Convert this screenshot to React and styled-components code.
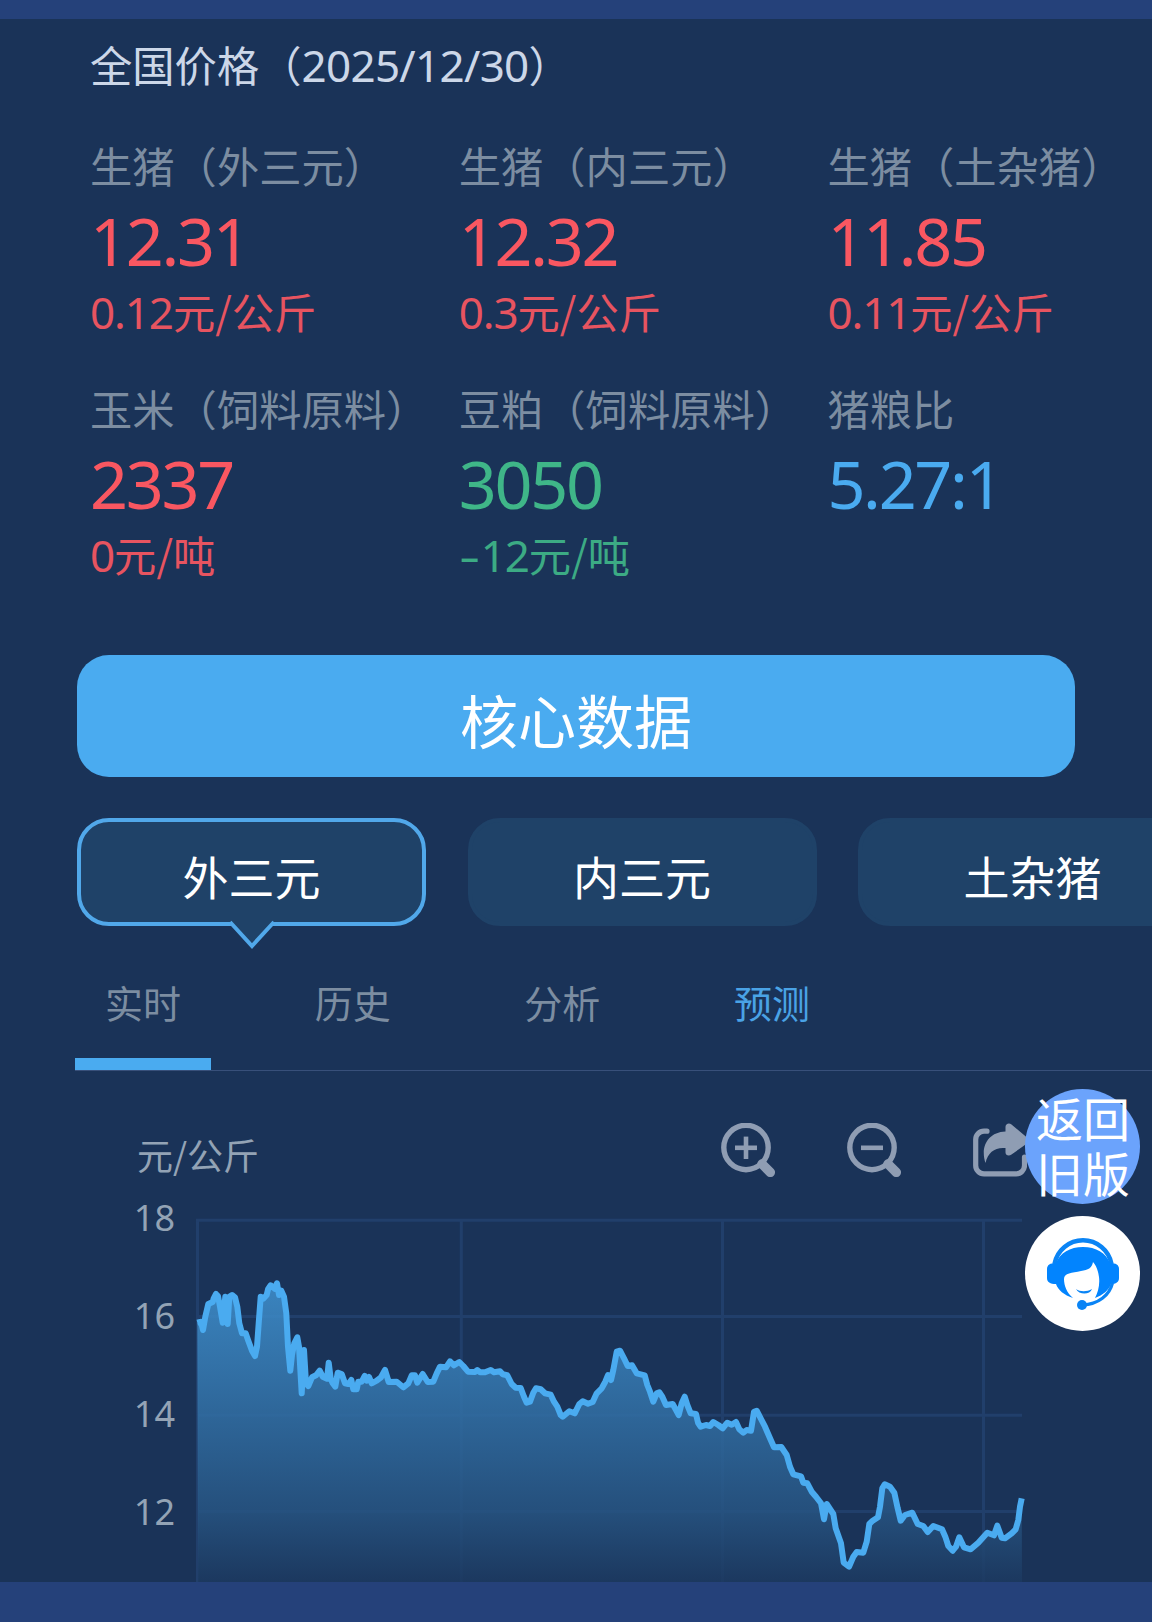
import React from 'react';
import styled, { createGlobalStyle } from 'styled-components';

const prices = [
  { label: '生猪（外三元）', value: '12.31', diff: '0.12', unit: '元/公斤', color: '#f95761' },
  { label: '生猪（内三元）', value: '12.32', diff: '0.3', unit: '元/公斤', color: '#f95761' },
  { label: '生猪（土杂猪）', value: '11.85', diff: '0.11', unit: '元/公斤', color: '#f95761' },
  { label: '玉米（饲料原料）', value: '2337', diff: '0', unit: '元/吨', color: '#f95761' },
  { label: '豆粕（饲料原料）', value: '3050', sign: '-', diff: '12', unit: '元/吨', color: '#3fb688' },
  { label: '猪粮比', value: '5.27:1', color: '#4aabf0' },
];

const kinds = ['外三元', '内三元', '土杂猪'];
const tabs = ['实时', '历史', '分析', '预测'];
const ticks = [18, 16, 14, 12];
const gridX = [7.5, 271.3, 532.5, 793.5];
const gridY = [10.3, 106.5, 205.3, 301.5];

const points = [
  [7.3, 112.7], [11, 111.7], [13, 120], [15.3, 106.7], [18.3, 94], [22.7, 92], [23.7, 88.3], [26, 84],
  [28, 86], [30, 96.7], [32.7, 112.7], [35.3, 86.7], [37.7, 114], [39.3, 86.7], [42, 85], [45, 87.3],
  [47.3, 96.7], [49.3, 113.3], [52, 123.3], [55.7, 123.3], [58.3, 130.7], [62, 140.7], [65, 146],
  [67, 136.7], [68.7, 113.3], [70.7, 86.7], [73.3, 88.7], [76.7, 85], [78, 79.3], [80.7, 75.3],
  [84.7, 78.7], [87, 73.3], [89, 85], [91.3, 80.7], [94, 86.7], [96.3, 103.3], [98, 136.7],
  [100.3, 160.7], [102, 145], [104.3, 133.3], [107.3, 127.3], [109, 136.7], [111.7, 183.3], [114, 140],
  [116, 173.3], [118.3, 176], [122, 167.3], [126, 165.3], [129.7, 160.7], [132.7, 166.7], [137, 168.7],
  [138.7, 152.7], [140.7, 168.7], [142.7, 173.3], [145.3, 176.7], [147.7, 162.7], [151.7, 164],
  [155, 173.3], [158.3, 174], [161.3, 170], [163.3, 179.3], [166.7, 179.3], [168.3, 171.7],
  [171.7, 171.7], [174.7, 166], [176.7, 170.7], [179, 167], [181.7, 173.3], [186.7, 170.7],
  [191, 167.3], [195, 160], [198.7, 172], [206.7, 171.7], [213.3, 177.3], [218.3, 173.3],
  [221.7, 165.3], [225, 165.3], [227.3, 172.7], [232.7, 164], [237.7, 172], [243.3, 171.7],
  [246.7, 163.3], [250, 156.7], [256, 157.3], [260, 151.3], [264, 155.3], [269.3, 152], [273.3, 156],
  [278, 161.7], [285, 162], [287.3, 160], [290, 162.3], [295, 162.3], [300.7, 160], [304, 162.3],
  [310, 161.3], [312.7, 164.3], [317.3, 165.3], [321.7, 174], [325.7, 177.7], [330.7, 178],
  [334, 186.7], [336.7, 192.7], [340, 191.7], [343.3, 182.7], [346, 178.3], [350.7, 179.3],
  [355, 183.3], [360.7, 184.7], [364, 191.7], [367.3, 196.7], [370.7, 205], [372.7, 206.7],
  [379.3, 201.3], [384.7, 203.3], [389.3, 194], [392.7, 191.3], [398, 193.7], [402.7, 192],
  [406.7, 183.3], [411.7, 178.3], [415.3, 171.7], [418, 165], [421, 170], [423.3, 160],
  [426.7, 141.7], [430, 140.7], [434, 148.3], [437.7, 156], [442, 155.3], [446.7, 163.3],
  [454.7, 165.3], [457.3, 175], [460, 181.7], [463.3, 191.7], [466.7, 183.3], [469.3, 182.3],
  [472.3, 186.7], [476, 195], [482.7, 194], [486, 200], [488.7, 205], [491.7, 193.3], [494.7, 186.7],
  [497.3, 195], [500.7, 203.3], [506, 204], [508, 212.7], [510.7, 216.7], [516, 215], [520, 216],
  [523.3, 212], [528.3, 215], [532.7, 218.3], [537.3, 212.7], [541.7, 214.7], [546, 212],
  [549.3, 219.3], [553.3, 222.7], [556.7, 220], [561, 220.7], [564, 201.7], [566.7, 200.7],
  [575, 216.7], [580, 228.3], [584, 237.3], [591.3, 237], [596.7, 245], [600, 256.7], [603.3, 264.3],
  [611, 266.3], [613.3, 272.7], [617.3, 273.3], [621.7, 281.7], [626, 286.7], [631, 293.3],
  [634, 309.3], [636.7, 294], [643.3, 304], [645.7, 318.3], [651, 333.3], [653.7, 352.7],
  [659, 356.7], [663.3, 346.7], [666.7, 342], [673.3, 342.7], [676.7, 331.7], [679.3, 314],
  [682.7, 310.7], [688, 307.3], [690, 296.7], [692.3, 278.3], [694.7, 274.3], [700, 276.7],
  [704.3, 282.7], [707.7, 298.3], [710.7, 310.7], [715, 305], [722.3, 302.7], [727.7, 314],
  [733.3, 316], [737.7, 322], [743.3, 316], [752, 319.3], [755.3, 326.7], [758.3, 336],
  [762.7, 340.7], [766, 336.7], [769.3, 327.3], [774, 337.3], [780.7, 339.3], [788.3, 332.7],
  [797.3, 322.7], [804, 325.3], [807.3, 315.7], [811.7, 327.7], [815, 328.3], [821.7, 323.3],
  [825.7, 319.3], [828.3, 310], [830, 296.7], [831.7, 288.3],
];

const line = points.map((p) => p.join(',')).join(' ');

const ZoomIcon = ({ plus }) => (
  <svg width='54' height='54' viewBox='0 0 54 54' fill='none' stroke='#8f9db3'>
    <circle cx='25' cy='24.5' r='22.2' strokeWidth='5.4' />
    <path d='M14 24.8h22' strokeWidth='4.6' />
    {plus && <path d='M25 13.6v22.4' strokeWidth='4.6' />}
    <path d='M41 41l8.300 8.300' strokeWidth='9.5' strokeLinecap='round' />
  </svg>
);

const ShareIcon = () => (
  <svg width='54' height='54' viewBox='0 0 54 54' fill='none'>
    <path
      d='M14 8.2h-3a8.3 8.3 0 0 0-8.3 8.3v26a8.3 8.3 0 0 0 8.3 8.3h32.2a8.3 8.3 0 0 0 8.3-8.3V34'
      stroke='#8f9db3'
      strokeWidth='5.2'
      strokeLinecap='round'
    />
    <path
      d='M32.5 8.5V3.8C32.5 .8 36 -.8 38.500 1.500L54 14.500C56 16.500 56 18.500 54 20.500L38.500 31.500C36 33.500 32.500 32.500 32.500 29.500V25C22 24 15 29 12.500 40C7 24 15 9 32.500 8.500Z'
      fill='#8f9db3'
    />
  </svg>
);

const ServiceIcon = () => (
  <svg width='72' height='74' viewBox='0 0 72 74' fill='none'>
    <path d='M7.5 27a29 29 0 0 1 57 0' stroke='#0a84f5' strokeWidth='4.5' />
    <path
      d='M9 26C13 16 23 10 36 10s23 6 27 16c6 0 9 2 9 6v9c0 4-3 6-8 6-2 6-8 11-16 14 3-6 5-13 4-21-1-7-3-12-6-15-1 6-5 8-12 9-9 2-17 2-17 8 0 7 3 14 9 19-9-3-15-8-17-14-6 0-9-2-9-6V32c0-4 3-6 9-6Z'
      fill='#0284fe'
    />
    <path d='M29 52c4 3 11 3 16 0-2 6-13 6-16 0Z' fill='#0a84f5' />
    <path d='M65.500 46c-3 12-14 21.500-30 22' stroke='#0a84f5' strokeWidth='3.2' />
    <circle cx='35' cy='68' r='5' fill='#0a84f5' />
  </svg>
);

const App = () => {
  return (
    <>
      <GlobalStyle />
      <Page>
        <Content>
          <Title>
            全国价格（<Num $spacing='-0.7px'>2025/12/30</Num>）
          </Title>
          <PriceGrid>
            {prices.map((item) => (
              <PriceCell key={item.label}>
                <PriceLabel>{item.label}</PriceLabel>
                <PriceValue $color={item.color}>{item.value}</PriceValue>
                {item.unit && (
                  <PriceDiff $color={item.color}>
                    <Num>
                      {item.sign && <Sign>{item.sign}</Sign>}
                      {item.diff}
                    </Num>
                    {item.unit}
                  </PriceDiff>
                )}
              </PriceCell>
            ))}
          </PriceGrid>
          <CoreButton>核心数据</CoreButton>
          <KindRow>
            {kinds.map((kind, i) => (
              <KindButton key={kind} $active={i === 0}>
                {kind}
                {i === 0 && (
                  <Pointer width='46' height='32' viewBox='0 0 46 32'>
                    <path d='M1 0H45V4L23 28L1 4Z' fill='#1f4268' />
                    <path d='M1 4L23 28L45 4' fill='none' stroke='#51a8ea' strokeWidth='4' />
                  </Pointer>
                )}
              </KindButton>
            ))}
          </KindRow>
          <TabRow>
            {tabs.map((tab, i) => (
              <Tab key={tab} $active={i === 0} $highlight={i === 3}>
                {tab}
              </Tab>
            ))}
          </TabRow>
          <ChartHeader>
            <Unit>元/公斤</Unit>
            <Tools>
              <ZoomIcon plus />
              <ZoomIcon />
              <ShareIcon />
            </Tools>
          </ChartHeader>
          <ChartBody>
            <Axis>
              {ticks.map((tick) => (
                <Tick key={tick}>{tick}</Tick>
              ))}
            </Axis>
            <svg width='840' height='372' viewBox='0 0 840 372'>
              <defs>
                <linearGradient id='area' gradientUnits='userSpaceOnUse' x1='0' y1='72' x2='0' y2='372'>
                  <stop offset='0' stopColor='#4093d2' />
                  <stop offset='0.76' stopColor='#275583' />
                  <stop offset='1' stopColor='#1c3960' />
                </linearGradient>
              </defs>
              <g stroke='#213f6b' strokeWidth='3'>
                {gridX.map((x) => (
                  <path key={x} d={`M${x} 9V372`} />
                ))}
                {gridY.map((y) => (
                  <path key={y} d={`M6 ${y}H832`} />
                ))}
              </g>
              <polygon points={`8,372 ${line} 832,372`} fill='url(#area)' fillOpacity='0.85' />
              <polyline
                points={line}
                fill='none'
                stroke='#4aabf0'
                strokeWidth='6'
                strokeLinejoin='round'
              />
            </svg>
          </ChartBody>
        </Content>
        <Floating>
          <OldVersion>
            <span>返回</span>
            <span>旧版</span>
          </OldVersion>
          <Service>
            <ServiceIcon />
          </Service>
        </Floating>
      </Page>
    </>
  );
};

const GlobalStyle = createGlobalStyle`
  * {
    box-sizing: border-box;
  }

  body {
    margin: 0;
    background: #25417a;
    font-family: 'Noto Sans CJK SC', sans-serif;
  }
`;

const Page = styled.div`
  position: relative;
  width: 1152px;
  height: 1622px;
  padding: 19px 0 40px;
  background: #25417a;
  overflow: hidden;
`;

const Content = styled.main`
  display: flex;
  flex-direction: column;
  height: 1563px;
  background: #1a3358;
  overflow: hidden;
`;

const Num = styled.span`
  font-family: 'Noto Sans', sans-serif;
  font-size: 44px;
  letter-spacing: ${({ $spacing }) => $spacing || '-1.1px'};
`;

const Sign = styled.span`
  display: inline-block;
  width: 22px;
  transform: scaleX(1.5);
  transform-origin: left;
`;

const Title = styled.h1`
  margin: 15px 0 0 90px;
  height: 60px;
  line-height: 60px;
  font-size: 42.3px;
  font-weight: 400;
  color: #ccd7e8;
  white-space: nowrap;
`;

const PriceGrid = styled.section`
  display: grid;
  grid-template-columns: repeat(3, 368.7px);
  grid-auto-rows: 243px;
  margin: 41px 0 0 90px;
  height: 520px;
`;

const PriceCell = styled.div`
  display: flex;
  flex-direction: column;
  white-space: nowrap;
`;

const PriceLabel = styled.span`
  height: 60px;
  line-height: 60px;
  font-size: 42.3px;
  color: #7c8da1;
`;

const PriceValue = styled.span`
  height: 86px;
  line-height: 90px;
  font-family: 'Noto Sans', sans-serif;
  font-size: 66.5px;
  letter-spacing: -2.3px;
  color: ${({ $color }) => $color};
`;

const PriceDiff = styled.span`
  height: 60px;
  line-height: 60px;
  font-size: 42.3px;
  color: ${({ $color }) => $color};
  opacity: 0.92;
`;

const CoreButton = styled.button`
  flex: none;
  width: 998px;
  height: 122px;
  margin: 0 0 0 77px;
  padding: 5px 0 0;
  border: none;
  border-radius: 32px;
  background: #4aabf0;
  color: #fff;
  font-family: inherit;
  font-size: 58px;
`;

const KindRow = styled.div`
  display: flex;
  gap: 41.5px;
  margin: 41px 0 0 77px;
`;

const KindButton = styled.button`
  position: relative;
  flex: none;
  width: 349px;
  height: 108px;
  padding: 5px 0 0;
  border: 4px solid ${({ $active }) => ($active ? '#51a8ea' : '#1f4268')};
  border-radius: 32px;
  background: #1f4268;
  color: #fff;
  font-family: inherit;
  font-size: 46px;
`;

const Pointer = styled.svg`
  position: absolute;
  left: 147.5px;
  top: 96px;
`;

const TabRow = styled.nav`
  display: flex;
  gap: 73.7px;
  height: 112px;
  margin: 33px 0 0 75px;
  border-bottom: 1px solid #38507a;
`;

const Tab = styled.span`
  width: 136px;
  padding-top: 16px;
  line-height: 54px;
  text-align: center;
  font-size: 38px;
  color: ${({ $highlight }) => ($highlight ? '#4aa3e6' : '#7c8da1')};
  border-bottom: 12px solid ${({ $active }) => ($active ? '#4aabf0' : 'transparent')};
`;

const ChartHeader = styled.div`
  display: flex;
  justify-content: space-between;
  align-items: flex-start;
  height: 139px;
  padding: 52px 125px 0 137px;
`;

const Unit = styled.span`
  padding-top: 4px;
  line-height: 54px;
  font-size: 36px;
  color: #93a3b5;
`;

const Tools = styled.div`
  display: flex;
  gap: 72px;
`;

const ChartBody = styled.div`
  display: flex;
`;

const Axis = styled.div`
  width: 190px;
  padding-right: 15px;
  margin-top: -41px;
  text-align: right;
`;

const Tick = styled.div`
  height: 98px;
  line-height: 98px;
  font-family: 'Noto Sans', sans-serif;
  font-size: 36px;
  color: #93a3b5;
`;

const Floating = styled.aside`
  position: absolute;
  top: 1089px;
  left: 1025px;
  display: flex;
  flex-direction: column;
  gap: 12px;
`;

const OldVersion = styled.div`
  display: flex;
  flex-direction: column;
  align-items: center;
  width: 115px;
  height: 115px;
  padding-left: 1px;
  border-radius: 50%;
  background: #6ba3fc;
  color: #fff;
  font-size: 47px;
  line-height: 57px;

  span {
    height: 57px;
    margin-top: -1.5px;
  }
`;

const Service = styled.div`
  display: flex;
  justify-content: center;
  align-items: center;
  width: 115px;
  height: 115px;
  border-radius: 50%;
  background: #fff;
`;

export default App;
